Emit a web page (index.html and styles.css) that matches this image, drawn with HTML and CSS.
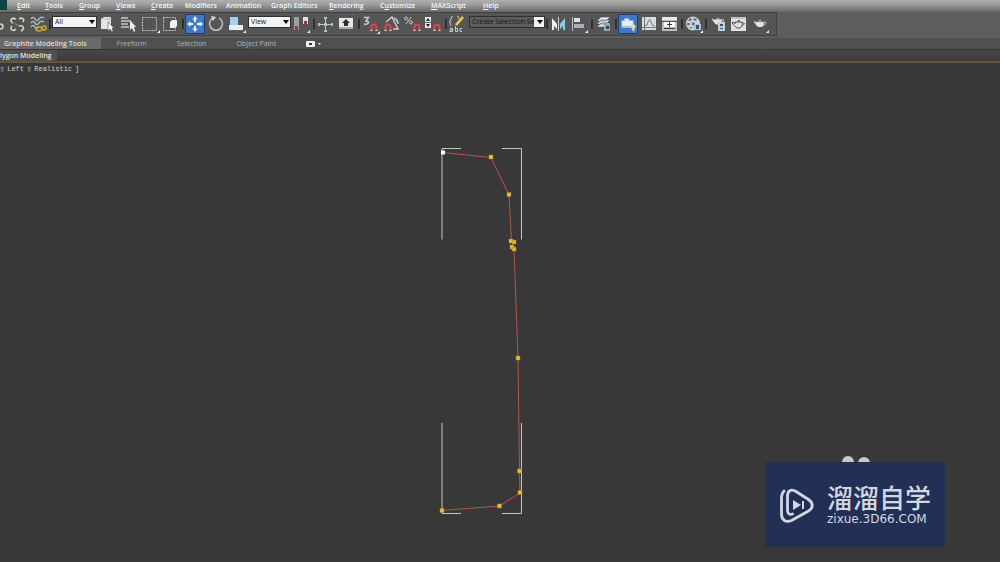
FILE: index.html
```html
<!DOCTYPE html>
<html lang="en">
<head>
<meta charset="utf-8">
<title>Graphite Modeling Tools</title>
<link rel="stylesheet" href="styles.css">
</head>
<body>
<svg class="defs" aria-hidden="true">
  <defs>
    <symbol id="magnet" viewBox="0 0 8 8"><path d="M1.500 8V4a2.500 2.500 0 0 1 5 0v4" fill="none" stroke="#d9474c" stroke-width="1.900"/><path d="M.5 6.800h2v1.200h-2zM5.500 6.800h2v1.200h-2z" fill="#e4cccc"/></symbol>
    <symbol id="corner" viewBox="0 0 3 3"><path d="M3 0v3H0z" fill="#eee"/></symbol>
    <symbol id="teapot" viewBox="0 0 16 10"><path d="M4 3h8c1 3 0 5-2 6H6C4 8 3 6 1 3l1-1 2 2zM6 2l2-1 2 1z" fill="#e2e2e0"/><path d="M12 4c3-2 4 1 0 3" fill="none" stroke="#e2e2e0"/></symbol>
  </defs>
</svg>

<header class="menubar">
  <span class="app-logo"></span>
  <nav class="menus" aria-label="Main menu">
    <button><u>E</u>dit</button><button><u>T</u>ools</button><button><u>G</u>roup</button><button><u>V</u>iews</button><button><u>C</u>reate</button><button>Modifiers</button><button>Animation</button><button>Graph Editors</button><button><u>R</u>endering</button><button>C<u>u</u>stomize</button><button><u>M</u>AXScript</button><button><u>H</u>elp</button>
  </nav>
</header>

<div class="toolbar-row">
<div class="toolbar" role="toolbar" aria-label="Main toolbar">
  <button class="tool" aria-label="Link"><svg viewBox="0 0 20 20"><path d="M10 6l3 3m1 1c4 0 4 5 0 5" class="line cream"/></svg></button>
  <button class="tool" aria-label="Unlink"><svg viewBox="0 0 20 20"><path d="M9 5C4 3 2 7 6 9M12 5c3-2 6 0 4 3M5 12c-3 3 1 6 4 3M12 12c5-1 6 3 2 5" class="line cream"/><path d="M7 9l5 3" class="line dim"/></svg></button>
  <button class="tool" aria-label="Bind to space warp"><svg viewBox="0 0 20 20"><path d="M3 5q2-3 4 0t4 0 5-1M3 9q2-3 4 0t4 0 5-1M3 13q2-3 4 0t3 0" class="line bluegray"/><ellipse cx="11" cy="15" rx="3" ry="2" class="line gold"/><ellipse cx="16" cy="14" rx="2" ry="2" class="line gold"/></svg></button>
  <span class="sep"></span>
  <span class="combo combo-filter"><select aria-label="Selection filter"><option>All</option></select><svg viewBox="0 0 6 4"><path d="M0 0h6L3 4z"/></svg></span>
  <button class="tool" aria-label="Select object"><svg viewBox="0 0 20 20"><path d="M3 5l3-2h7v9l-2 3H3z" fill="#e4e6e6"/><path d="M3 5h8l2-2M11 5v9" fill="none" stroke="#b5bcc0"/><path d="M10 8v9l2-2 2 3 1-1-1-3h2z" fill="#fff" stroke="#555" stroke-width=".6"/></svg></button>
  <button class="tool" aria-label="Select by name"><svg viewBox="0 0 20 20"><path d="M2 4h7M2 7h9M2 10h7M2 13h8" class="line gray"/><path d="M11 6v10l2-2 2 4 1-1-1-4h2z" fill="#eee"/></svg></button>
  <button class="tool" aria-label="Rectangular selection region"><svg viewBox="0 0 20 20"><path d="M2.500 3.500h14v13h-14z" fill="none" stroke="#c0c0c0" stroke-dasharray="2 1"/><use href="#corner" x="17" y="16" width="3" height="3"/></svg></button>
  <button class="tool" aria-label="Window crossing"><svg viewBox="0 0 20 20"><path d="M2.500 3.500h12v13h-12z" fill="none" stroke="#c0c0c0" stroke-dasharray="2 1"/><path d="M9 8l2-2h5v6l-2 2H9z" fill="#edf0f1"/></svg></button>
  <span class="sep"></span>
  <button class="tool active" aria-label="Move"><svg viewBox="0 0 20 20"><path d="M10 1l3 4h-2v3H9V5H7zM10 19l3-4h-2v-3H9v3H7zM1 10l4-3v2h3v2H5v2zM19 10l-4-3v2h-3v2h3v2z" fill="#e6f5ff"/></svg></button>
  <button class="tool" aria-label="Rotate"><svg viewBox="0 0 20 20"><path d="M7 4a6.500 6.500 0 1 0 6 0" fill="none" stroke="#b9bdc0" stroke-width="1.600"/><path d="M5 2l5 1-3 4z" fill="#d8d8d8"/></svg></button>
  <button class="tool" aria-label="Scale"><svg viewBox="0 0 20 20"><path d="M3 3h8v8H3z" fill="#a4d0ef"/><path d="M2 11h14v5H2z" fill="#ecefef"/><use href="#corner" x="16" y="16" width="3" height="3"/></svg></button>
  <span class="combo combo-view"><select aria-label="Reference coordinate system"><option>View</option></select><svg viewBox="0 0 6 4"><path d="M0 0h6L3 4z"/></svg></span>
  <button class="tool" aria-label="Use pivot point center"><svg viewBox="0 0 20 20"><path d="M2 3h5v13H2z" fill="#9b9fa2"/><path d="M11 3h5v7h-5z" fill="#dfe2e3"/><path d="M3 12h3v4H3zM12 7h3v3h-3z" fill="#b13139"/><use href="#corner" x="15" y="16" width="3" height="3"/></svg></button>
  <span class="sep"></span>
  <button class="tool" aria-label="Select and manipulate"><svg viewBox="0 0 20 20"><path d="M9.500 4v13M3 10.500h13" fill="none" stroke="#c8c8c8"/><path d="M8 3h3v2H8zM8 16h3v2H8zM2 9h2v3H2zM15 9h2v3h-2z" fill="#bbb"/><path d="M8 9h3v3H8z" fill="#9ed39b"/></svg></button>
  <button class="tool" aria-label="Keyboard shortcut override"><svg viewBox="0 0 20 20"><path d="M2 4h14v11H2z" fill="#e8e8e8"/><path d="M2 13h14v2H2z" fill="#aaa"/><path d="M9 5l4 4h-2v3H7V9H5z" fill="#26303a"/></svg></button>
  <span class="sep"></span>
  <button class="tool" aria-label="Snaps toggle"><svg viewBox="0 0 20 20"><path d="M3 3.500h4.500L5 7c4 0 3 4-2 3" class="line gray"/><use href="#magnet" x="9" y="9" width="8" height="8"/><use href="#corner" x="16" y="17" width="3" height="3"/></svg></button>
  <button class="tool" aria-label="Angle snap"><svg viewBox="0 0 20 20"><path d="M4 8l6-5 6 12h-5M12 4q4 2 4 6" class="line gray"/><use href="#magnet" x="2" y="9" width="8" height="8"/></svg></button>
  <button class="tool" aria-label="Percent snap"><svg viewBox="0 0 20 20"><path d="M8 3L3 10" fill="none" stroke="#c8c8c8"/><circle cx="3" cy="4.500" r="1.500" fill="none" stroke="#c8c8c8"/><circle cx="8" cy="8.500" r="1.500" fill="none" stroke="#c8c8c8"/><use href="#magnet" x="10" y="9" width="8" height="8"/></svg></button>
  <button class="tool" aria-label="Spinner snap"><svg viewBox="0 0 20 20"><path d="M1 3h6v5H1zM1 9h6v5H1z" fill="#e6e6e6"/><path d="M2 7l2-3 2 3zM2 10h4l-2 3z" fill="#222"/><use href="#magnet" x="9" y="9" width="8" height="8"/></svg></button>
  <span class="sep"></span>
  <button class="tool" aria-label="Edit named selection sets"><svg viewBox="0 0 20 20"><path d="M5 2q-2 0-2 3t-2 3q2 0 2 4M9 2q2 0 2 3" fill="none" stroke="#c8c8c8"/><path d="M15 3l-7 8" stroke="#f0cf4d" stroke-width="2.500"/><path d="M2 14.500h2.500v3H2v-1.500h2M7.500 12v5.500h2v-3h-2M14 14.500h-2v3h2" fill="none" stroke="#c8c8c8"/></svg></button>
  <span class="combo combo-sets"><select aria-label="Named selection sets"><option>Create Selection Se</option></select><svg viewBox="0 0 6 4"><path d="M0 0h6L3 4z"/></svg></span>
  <span class="sep"></span>
  <button class="tool" aria-label="Mirror"><svg viewBox="0 0 20 20"><path d="M3 16V4l5 6v5l-3-3v4z" fill="#edf0f2"/><path d="M16 16V4l-5 6v5l3-3v4z" fill="#8cccf0"/><path d="M9.500 3v14" stroke="#ccc"/></svg></button>
  <button class="tool" aria-label="Align"><svg viewBox="0 0 20 20"><path d="M2.500 3v14" stroke="#b8c0c6"/><path d="M4 4h6v4H4z" fill="#dce0e2"/><path d="M4 10h10v4H4z" fill="#a5b0ba"/><use href="#corner" x="15" y="16" width="3" height="3"/></svg></button>
  <span class="sep"></span>
  <button class="tool" aria-label="Layer manager"><svg viewBox="0 0 20 20"><path d="M7 3h9l-4 4H3zM7 6h9l-4 4H3zM7 9h9l-4 4H3z" fill="#e5e8e8" stroke="#555" stroke-width=".6"/><path d="M10 10h6v7h-6z" fill="#8fa5b9"/><path d="M12 12h3v3h-3z" fill="#35495d"/></svg></button>
  <span class="sep"></span>
  <button class="tool active" aria-label="Graphite modeling tools"><svg viewBox="0 0 20 20"><path d="M3 6h3V4h5v2h5v8H3z" fill="#e3edf6"/><path d="M3 12h13v2H3z" fill="#aac3dd"/><circle cx="16" cy="13" r="2.500" fill="#f4dc83"/><path d="M15 15h2v3h-2z" fill="#ddd"/></svg></button>
  <button class="tool" aria-label="Curve editor"><svg viewBox="0 0 20 20"><path d="M3 3h14v13H3z" fill="#d8dcdf"/><path d="M5.500 3v13M3 13.500h14M5 12q4 0 4-4 2-5 3 0t4 4" fill="none" stroke="#59616b" stroke-width=".8"/></svg></button>
  <button class="tool" aria-label="Schematic view"><svg viewBox="0 0 20 20"><path d="M2 3h15v14H2z" fill="#b9bdc0"/><path d="M2 3h15v3H2z" fill="#e8e8e8"/><path d="M2 7h15v1H2z" fill="#555"/><path d="M4 8h11v5H4z" fill="#fff"/><path d="M9.500 8v5M7 10.500h5M4 14.500h11" stroke="#33383d"/></svg></button>
  <span class="sep"></span>
  <button class="tool" aria-label="Material editor"><svg viewBox="0 0 20 20"><circle cx="9" cy="9.500" r="7" fill="#ccd1d4"/><path d="M6 4l2 1-1 2-3 0zM10 4l3 1-1 2-3-1zM3 9l3 0 0 2-3 0zM8 8l3 1-1 3-2-1zM5 13l3 0 0 2z" fill="#69757e"/><path d="M10 10h7v6h-7z" fill="#adc2d4"/><path d="M12 11h3v4h-3z" fill="#3c536a"/><use href="#corner" x="16" y="16" width="3" height="3"/></svg></button>
  <span class="sep"></span>
  <button class="tool" aria-label="Render setup"><svg viewBox="0 0 20 20"><use href="#teapot" x="3" y="2" width="14" height="10"/><path d="M10 8h7v9h-7z" fill="#bdd0df"/><path d="M12 10h3v2h-3zM12 14h3v1h-3z" fill="#3c536a"/></svg></button>
  <button class="tool" aria-label="Rendered frame window"><svg viewBox="0 0 20 20"><path d="M2 3h15v14H2z" fill="#dfe1e2"/><path d="M2 3h15v2H2z" fill="#bfc4c8"/><path d="M6 8h7c1 3 0 5-2 6H8C6 13 5 11 3 9l1-1 2 2zM8 8l2-2 1 2M13 9c3-1 3 1 0 3" fill="none" stroke="#4c5358"/></svg></button>
  <button class="tool" aria-label="Render production"><svg viewBox="0 0 20 20"><use href="#teapot" x="3" y="4" width="14" height="11"/><use href="#corner" x="16" y="16" width="3" height="3"/></svg></button>
</div>
</div>

<nav class="ribbon-tabs" aria-label="Ribbon">
  <button class="tab current">Graphite Modeling Tools</button>
  <button class="tab">Freeform</button>
  <button class="tab">Selection</button>
  <button class="tab">Object Paint</button>
  <button class="tab" aria-label="Ribbon display"><svg class="ribbon-toggle" viewBox="0 0 16 6"><rect width="9" height="6" rx="1" fill="#eee"/><path d="M3 2h3v2H3z" fill="#333"/><path d="M12 2h3l-1.500 2z" fill="#ddd"/></svg></button>
</nav>
<div class="ribbon-panel"><button class="panel-name">lygon Modeling</button></div>

<main class="viewport">
  <div class="view-label"><span>▯</span><span>Left</span><span>▯</span><span>Realistic</span><span>]</span></div>
  <svg class="scene" viewBox="0 63 1000 499" preserveAspectRatio="xMidYMin meet" role="img" aria-label="Spline profile">
    <path d="M442 239.500V148.500H461M502 148.500H521.500V239.500M442 423V513.500H461M502 513.500H521.500V423" fill="none" stroke="#c4c4c4"/>
    <path d="M443 152.500L491 157.500L509 195L511.500 241L514 249L518 358L519.500 471L520 493L499.500 506L442 510.500" fill="none" stroke="#b4534f"/>
    <g fill="#e2c43c" stroke="#a08218" stroke-width=".5">
      <path d="M489 155h4v4h-4zM507 192.500h4v4h-4zM509 239h4v4h-4zM512 240h4v4h-4zM510 245h4v4h-4zM512 247h4v4h-4zM516 356h4v4h-4zM517.500 469h4v4h-4zM518 490.500h4v4h-4zM497.500 504h4v4h-4zM440 508.500h4v4h-4z"/>
    </g>
    <path d="M441 150.500h4v4h-4z" fill="#fff"/>
    <circle cx="848" cy="462" r="6" fill="#c9c9c4"/><circle cx="864" cy="463" r="6" fill="#c9c9c4"/>
    <path d="M0 524l2 2-2 3" fill="none" stroke="#23237d"/><path d="M0 541h2" stroke="#6a3328"/>
  </svg>
  <aside class="watermark">
    <svg class="mark" viewBox="0 0 36 38"><path d="M5 5C3 7 2.500 8 2.500 11v17c0 6 4 9 10 6.500l17-9.500c5-3 5-8 0-11.500L17 5.500C12 2.500 8.500 5 8.500 10v14c0 4 2 5 5 4" fill="none" stroke="#d2d7e2" stroke-width="2.800" stroke-linecap="round"/><path d="M14 14l8 5-8 5zM23 15h2v8h-2z" fill="#d2d7e2"/></svg>
    <div class="brand"><span class="brand-name" lang="zh">溜溜自学</span><span class="brand-url">zixue.3D66.COM</span></div>
  </aside>
</main>
</body>
</html>
```
FILE: styles.css
```css
* { box-sizing: border-box; }
body {
  margin: 0;
  min-height: 100vh;
  display: flex;
  flex-direction: column;
  background: #383838;
  color: #e6e6e6;
  font: 7px/10px "Open Sans", "Noto Sans", sans-serif;
  overflow: hidden;
}
button {
  margin: 0;
  padding: 0;
  border: 0;
  background: none;
  color: inherit;
  font: inherit;
  text-align: left;
  white-space: nowrap;
}
.defs { position: absolute; width: 0; height: 0; }

.menubar {
  display: flex;
  height: 12px;
  line-height: 12px;
  background: linear-gradient(#b0b0b0, #9a9a9a 40%, #686868);
}
.app-logo { width: 7px; height: 10px; margin-right: 10px; background: #0c4541; }
.menus {
  display: grid;
  grid-template-columns: 28px 34px 37px 35px 34px 41px 45px 58px 51px 51px 52px auto;
  color: #f6f6f6;
  font-weight: 600;
  text-shadow: 0 0 1px #555;
}

.toolbar-row { height: 26px; background: #5e5e5e; overflow: hidden; }
.toolbar {
  display: flex;
  align-items: center;
  gap: 1px;
  width: max-content;
  height: 24px;
  margin-left: -14px;
  padding-right: 6px;
  background: #555;
  border: 1px solid #414141;
  border-left: 0;
}
.tool { flex: none; width: 20px; height: 20px; }
.tool svg { display: block; width: 20px; height: 20px; }
.tool.active { background: #3e78c6; border: 1px solid #203f70; }
.tool.active svg { width: 18px; height: 18px; }
.sep { width: 2px; height: 10px; background: #303030; }

.line { fill: none; stroke-width: 1.5; }
.cream { stroke: #ddd7bf; }
.dim { stroke: #777; }
.gray { stroke: #c8c8c8; }
.bluegray { stroke: #a9b6c0; }
.gold { stroke: #d5a735; }

.combo { position: relative; display: flex; height: 12px; margin-bottom: 4px; }
.combo select {
  width: 100%;
  height: 12px;
  padding: 0 2px;
  appearance: none;
  border: 1px solid #303030;
  border-radius: 0;
  background: #f3f3f3;
  color: #222;
  font: inherit;
}
.combo svg { position: absolute; right: 2px; top: 4px; width: 6px; height: 4px; pointer-events: none; }
.combo-filter { width: 45px; }
.combo-view { width: 43px; }
.combo-sets { width: 76px; }
.combo-sets select { background: linear-gradient(90deg, #5c5c5c 64px, #f3f3f3 64px); color: #151515; }

.ribbon-tabs { display: flex; height: 11px; background: #505050; color: #b4b4b4; }
.tab { margin-right: 28px; }
.tab.current {
  padding: 0 14px 0 4px;
  margin-right: 16px;
  background: #696969;
  color: #dcdcdc;
  font-weight: 600;
}
.ribbon-toggle { display: block; width: 16px; height: 6px; }
.ribbon-panel {
  display: flex;
  height: 14px;
  border-top: 1px solid #38322f;
  border-bottom: 2px solid #665640;
  background: linear-gradient(#474747, #3a3a3a);
}
.panel-name { padding-right: 6px; background: #505050; color: #e4e4e4; font-weight: 600; }
.tab + .tab { margin-right: 30px; }

.viewport { position: relative; flex: 1; background: #383838; }
.scene { display: block; width: 100%; }
.view-label {
  position: absolute;
  left: 0;
  top: 1px;
  display: flex;
  gap: 3px;
  color: #d0d0d0;
  font: 7px/10px "Liberation Mono", monospace;
}
.watermark {
  position: absolute;
  right: 55px;
  bottom: 15px;
  display: flex;
  align-items: center;
  gap: 12px;
  width: 180px;
  height: 85px;
  padding-left: 14px;
  background: #233055;
  color: #d2d7e2;
}
.mark { width: 36px; height: 38px; }
.brand { display: flex; flex-direction: column; padding-bottom: 4px; }
.brand-name { font: 500 26px/32px "Noto Sans CJK SC", sans-serif; }
.brand-url { font: 12px/12px "DejaVu Sans", sans-serif; }
```
